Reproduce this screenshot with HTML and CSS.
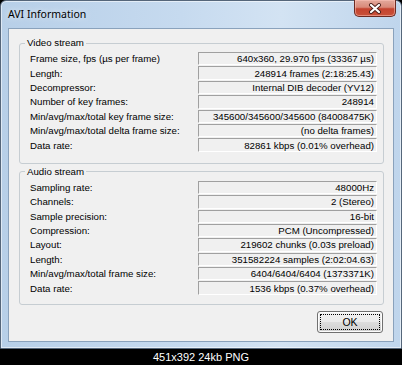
FILE: index.html
```html
<!DOCTYPE html>
<html>
<head>
<meta charset="utf-8">
<link rel="stylesheet" href="styles.css">
</head>
<body>
<div class="window">
  <div class="titlebar">
    <span class="title">AVI Information</span>
    <div class="close">
      <svg width="14" height="11" viewBox="0 0 14 11">
        <path d="M3 2 L11 9 M11 2 L3 9" stroke="#4a1f1a" stroke-width="4" stroke-linecap="round"/>
        <path d="M3 2 L11 9 M11 2 L3 9" stroke="#ffffff" stroke-width="2.2" stroke-linecap="round"/>
      </svg>
    </div>
  </div>
  <div class="client">
    <fieldset class="group">
      <legend>Video stream</legend>
      <div class="rows">
        <span class="lbl">Frame size, fps (µs per frame)</span><span class="val">640x360, 29.970 fps (33367 µs)</span>
        <span class="lbl">Length:</span><span class="val">248914 frames (2:18:25.43)</span>
        <span class="lbl">Decompressor:</span><span class="val">Internal DIB decoder (YV12)</span>
        <span class="lbl">Number of key frames:</span><span class="val">248914</span>
        <span class="lbl">Min/avg/max/total key frame size:</span><span class="val">345600/345600/345600 (84008475K)</span>
        <span class="lbl">Min/avg/max/total delta frame size:</span><span class="val">(no delta frames)</span>
        <span class="lbl">Data rate:</span><span class="val">82861 kbps (0.01% overhead)</span>
      </div>
    </fieldset>
    <fieldset class="group audio">
      <legend>Audio stream</legend>
      <div class="rows">
        <span class="lbl">Sampling rate:</span><span class="val">48000Hz</span>
        <span class="lbl">Channels:</span><span class="val">2 (Stereo)</span>
        <span class="lbl">Sample precision:</span><span class="val">16-bit</span>
        <span class="lbl">Compression:</span><span class="val">PCM (Uncompressed)</span>
        <span class="lbl">Layout:</span><span class="val">219602 chunks (0.03s preload)</span>
        <span class="lbl">Length:</span><span class="val">351582224 samples (2:02:04.63)</span>
        <span class="lbl">Min/avg/max/total frame size:</span><span class="val">6404/6404/6404 (1373371K)</span>
        <span class="lbl">Data rate:</span><span class="val">1536 kbps (0.37% overhead)</span>
      </div>
    </fieldset>
    <div class="buttons">
      <button class="ok"><span class="focus">OK</span></button>
    </div>
  </div>
</div>
<div class="caption">451x392 24kb PNG</div>
</body>
</html>
```

FILE: styles.css
```css
html, body {
  margin: 0;
  padding: 0;
  background: #000;
}
body {
  width: 402px;
  height: 365px;
  overflow: hidden;
}
.window {
  box-sizing: border-box;
  width: 402px;
  height: 349px;
  border: 1px solid #55667a;
  border-radius: 6px 6px 0 0;
  background: linear-gradient(to right, #b7cfe8 0%, #c6daef 45%, #d3e3f3 70%, #bfd5ec 100%);
  box-shadow: inset 0 0 0 1px rgba(255,255,255,0.55);
  display: flex;
  flex-direction: column;
}
.titlebar {
  height: 27px;
  display: flex;
  align-items: flex-start;
  justify-content: space-between;
  padding: 0 5px 0 7px;
}
.title {
  font-family: "Noto Sans", "Open Sans", sans-serif;
  font-size: 10.5px;
  line-height: 12px;
  color: #000;
  margin-top: 7px;
  text-shadow: 0 0 6px rgba(255,255,255,0.9);
}
.close {
  width: 42px;
  height: 17px;
  margin-top: -1px;
  box-sizing: border-box;
  border: 1px solid #6b2a22;
  border-top: none;
  border-radius: 0 0 5px 5px;
  background: linear-gradient(to bottom, #e3a99c 0%, #d98a7a 45%, #c4432f 55%, #c9523a 100%);
  box-shadow: inset 0 0 0 1px rgba(255,200,190,0.5);
  display: flex;
  align-items: center;
  justify-content: center;
}
.client {
  flex: 1;
  margin: 0 7px 6px 7px;
  background: #f0f0f0;
  border: 1px solid #8aa2bc;
  padding: 8px 10px 0 10px;
  display: flex;
  flex-direction: column;
  font-family: "Liberation Sans", Arial, sans-serif;
  font-size: 9.7px;
  color: #000;
}
.group {
  margin: 0;
  min-width: 0;
  width: 365px;
  box-sizing: border-box;
  border: 1px solid #c6cdd2;
  border-radius: 3px;
  padding: 3px 6px 11px 10px;
}
.group legend {
  padding: 0 2px;
  margin-left: -5px;
  line-height: 12px;
}
.group.audio {
  margin-top: 2px;
  padding-bottom: 9px;
}
.rows {
  display: grid;
  grid-template-columns: 168px 1fr;
  grid-auto-rows: 13.4px;
  row-gap: 1px;
}
.lbl {
  display: flex;
  align-items: center;
  white-space: nowrap;
}
.val {
  box-sizing: border-box;
  border-top: 1px solid #a0a0a0;
  border-left: 1px solid #a0a0a0;
  border-bottom: 1px solid #ffffff;
  border-right: 1px solid #ffffff;
  display: flex;
  align-items: center;
  justify-content: flex-end;
  padding-right: 2px;
  white-space: nowrap;
}
.buttons {
  display: flex;
  justify-content: flex-end;
  margin-top: 6px;
}
.ok {
  width: 66px;
  height: 22px;
  box-sizing: border-box;
  margin: 0;
  padding: 2px;
  border: 1px solid #707070;
  border-radius: 3px;
  background: linear-gradient(to bottom, #f2f2f2 0%, #ebebeb 48%, #dddddd 52%, #cfcfcf 100%);
  box-shadow: inset 0 0 0 1px #fcfcfc;
  font-family: "Liberation Sans", Arial, sans-serif;
  font-size: 10.5px;
  color: #000;
  display: flex;
}
.focus {
  flex: 1;
  border: 1px dotted #000;
  display: flex;
  align-items: center;
  justify-content: center;
}
.caption {
  height: 16px;
  line-height: 16px;
  text-align: center;
  color: #fff;
  font-family: "Liberation Sans", Arial, sans-serif;
  font-size: 11px;
}
```
